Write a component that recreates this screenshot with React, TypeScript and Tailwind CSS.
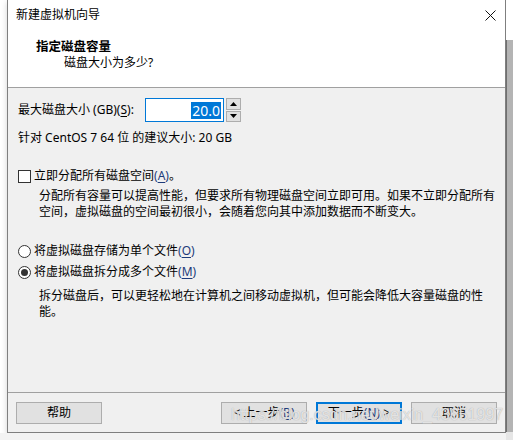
import React from "react";

const font = { fontFamily: '"Noto Sans", "Noto Sans CJK SC", sans-serif' };

function Key({ k }: { k: string }) {
  return (
    <span className="text-[#1d3b7a]">
      (<span className="underline underline-offset-2">{k}</span>)
    </span>
  );
}

function Radio({ checked }: { checked?: boolean }) {
  return (
    <span className="flex h-[13px] w-[13px] items-center justify-center rounded-full border border-[#333] bg-white">
      {checked && <span className="h-[7px] w-[7px] rounded-full bg-[#333]" />}
    </span>
  );
}

function Btn({ label, primary }: { label: React.ReactNode; primary?: boolean }) {
  return (
    <div
      className={
        "flex h-[22px] w-[86px] items-center justify-center bg-[#e1e1e1] text-[12px] leading-none " +
        (primary ? "border-2 border-[#0078d7]" : "border border-[#adadad]")
      }
    >
      {label}
    </div>
  );
}

export default function App() {
  return (
    <div className="relative flex h-[440px] w-[513px] overflow-hidden bg-white text-[12px] text-black" style={font}>
      <div className="w-[7px] shrink-0" />
      <div className="flex h-[433px] w-[499px] shrink-0 flex-col border-x border-b border-[#7f7f7f] shadow-[0_2px_6px_rgba(0,0,0,0.18)]">
        {/* title bar */}
        <div className="flex h-[30px] items-center bg-white pl-[8px] pr-[9px]">
          <span className="leading-none">新建虚拟机向导</span>
          <svg className="ml-auto" width="11" height="11" viewBox="0 0 11 11">
            <path d="M0.5 0.5 L10.5 10.5 M10.5 0.5 L0.5 10.5" stroke="#111" strokeWidth="1" />
          </svg>
        </div>
        {/* header */}
        <div className="h-[57px] bg-white pt-[9px]">
          <div className="pl-[28px] text-[12.5px] font-bold leading-[16px]">指定磁盘容量</div>
          <div className="pl-[56px] leading-[16px]">磁盘大小为多少?</div>
        </div>
        <div className="h-px bg-[#a0a0a0]" />
        {/* body */}
        <div className="flex flex-1 flex-col bg-[#f0f0f0]">
          <div className="px-[10px] pt-[10px]">
            <div className="flex h-[24px] items-center">
              <span className="w-[127px]">
                最大磁盘大小 (GB)(<span className="underline underline-offset-2">S</span>):
              </span>
              <div className="flex h-[24px] w-[79px] items-center justify-end border border-[#0078d7] bg-white pr-[2px]">
                <span className="bg-[#0078d7] px-[1px] text-[14px] leading-[17px] text-white">20.0</span>
              </div>
              <div className="ml-[2px] flex h-[24px] w-[15px] flex-col gap-px">
                <div className="flex flex-1 items-center justify-center border border-[#adadad] bg-[#e1e1e1]">
                  <svg width="7" height="4" viewBox="0 0 7 4"><path d="M3.5 0 L7 4 L0 4 Z" fill="#000" /></svg>
                </div>
                <div className="flex flex-1 items-center justify-center border border-[#adadad] bg-[#e1e1e1]">
                  <svg width="7" height="4" viewBox="0 0 7 4"><path d="M0 0 L7 0 L3.5 4 Z" fill="#000" /></svg>
                </div>
              </div>
            </div>
            <div className="mt-[8px] leading-[16px]">针对 CentOS 7 64 位 的建议大小: 20 GB</div>

            <div className="mt-[22px] flex h-[16px] items-center gap-[3px]">
              <span className="h-[13px] w-[13px] border border-[#333] bg-white" />
              <span>
                立即分配所有磁盘空间<Key k="A" />。
              </span>
            </div>
            <div className="mt-[4px] pl-[21px] leading-[16px]">
              分配所有容量可以提高性能，但要求所有物理磁盘空间立即可用。如果不立即分配所有
              <br />
              空间，虚拟磁盘的空间最初很小，会随着您向其中添加数据而不断变大。
            </div>

            <div className="mt-[23px] flex h-[16px] items-center gap-[3px]">
              <Radio />
              <span>
                将虚拟磁盘存储为单个文件<Key k="O" />
              </span>
            </div>
            <div className="mt-[5px] flex h-[16px] items-center gap-[3px]">
              <Radio checked />
              <span>
                将虚拟磁盘拆分成多个文件<Key k="M" />
              </span>
            </div>
            <div className="mt-[8px] pl-[21px] leading-[16px]">
              拆分磁盘后，可以更轻松地在计算机之间移动虚拟机，但可能会降低大容量磁盘的性
              <br />
              能。
            </div>
          </div>
          <div className="flex-1" />
          <div className="h-px bg-[#a0a0a0]" />
          <div className="flex h-[39px] items-start px-[8px] pt-[9px]">
            <Btn label="帮助" />
            <div className="ml-auto flex gap-[9px]">
              <Btn label={<span>&lt; 上一步<Key k="B" /></span>} />
              <Btn primary label={<span>下一步<Key k="N" /> &gt;</span>} />
              <Btn label="取消" />
            </div>
          </div>
        </div>
      </div>
      {/* window behind, right edge */}
      <div className="flex w-[7px] shrink-0 flex-col">
        <div className="h-[40px] bg-white" />
        <div className="flex-1 border-l border-[#6f6f6f] bg-[#b4b4b4]" />
        <div className="h-[8px] bg-[#e6e6e6]" />
      </div>
      <div className="absolute bottom-0 left-0 h-[7px] w-[506px] bg-[#f3f3f3]" />
      {/* watermark */}
      <div
        className="pointer-events-none absolute left-[231px] top-[405px] text-[16px] leading-[20px] text-white/70 [text-shadow:0_0_1px_#9a9a9a]"
        style={{ fontFamily: '"Liberation Sans", Arial, sans-serif' }}
      >
        https://blog.csdn.net/weixin_43651997
      </div>
    </div>
  );
}
